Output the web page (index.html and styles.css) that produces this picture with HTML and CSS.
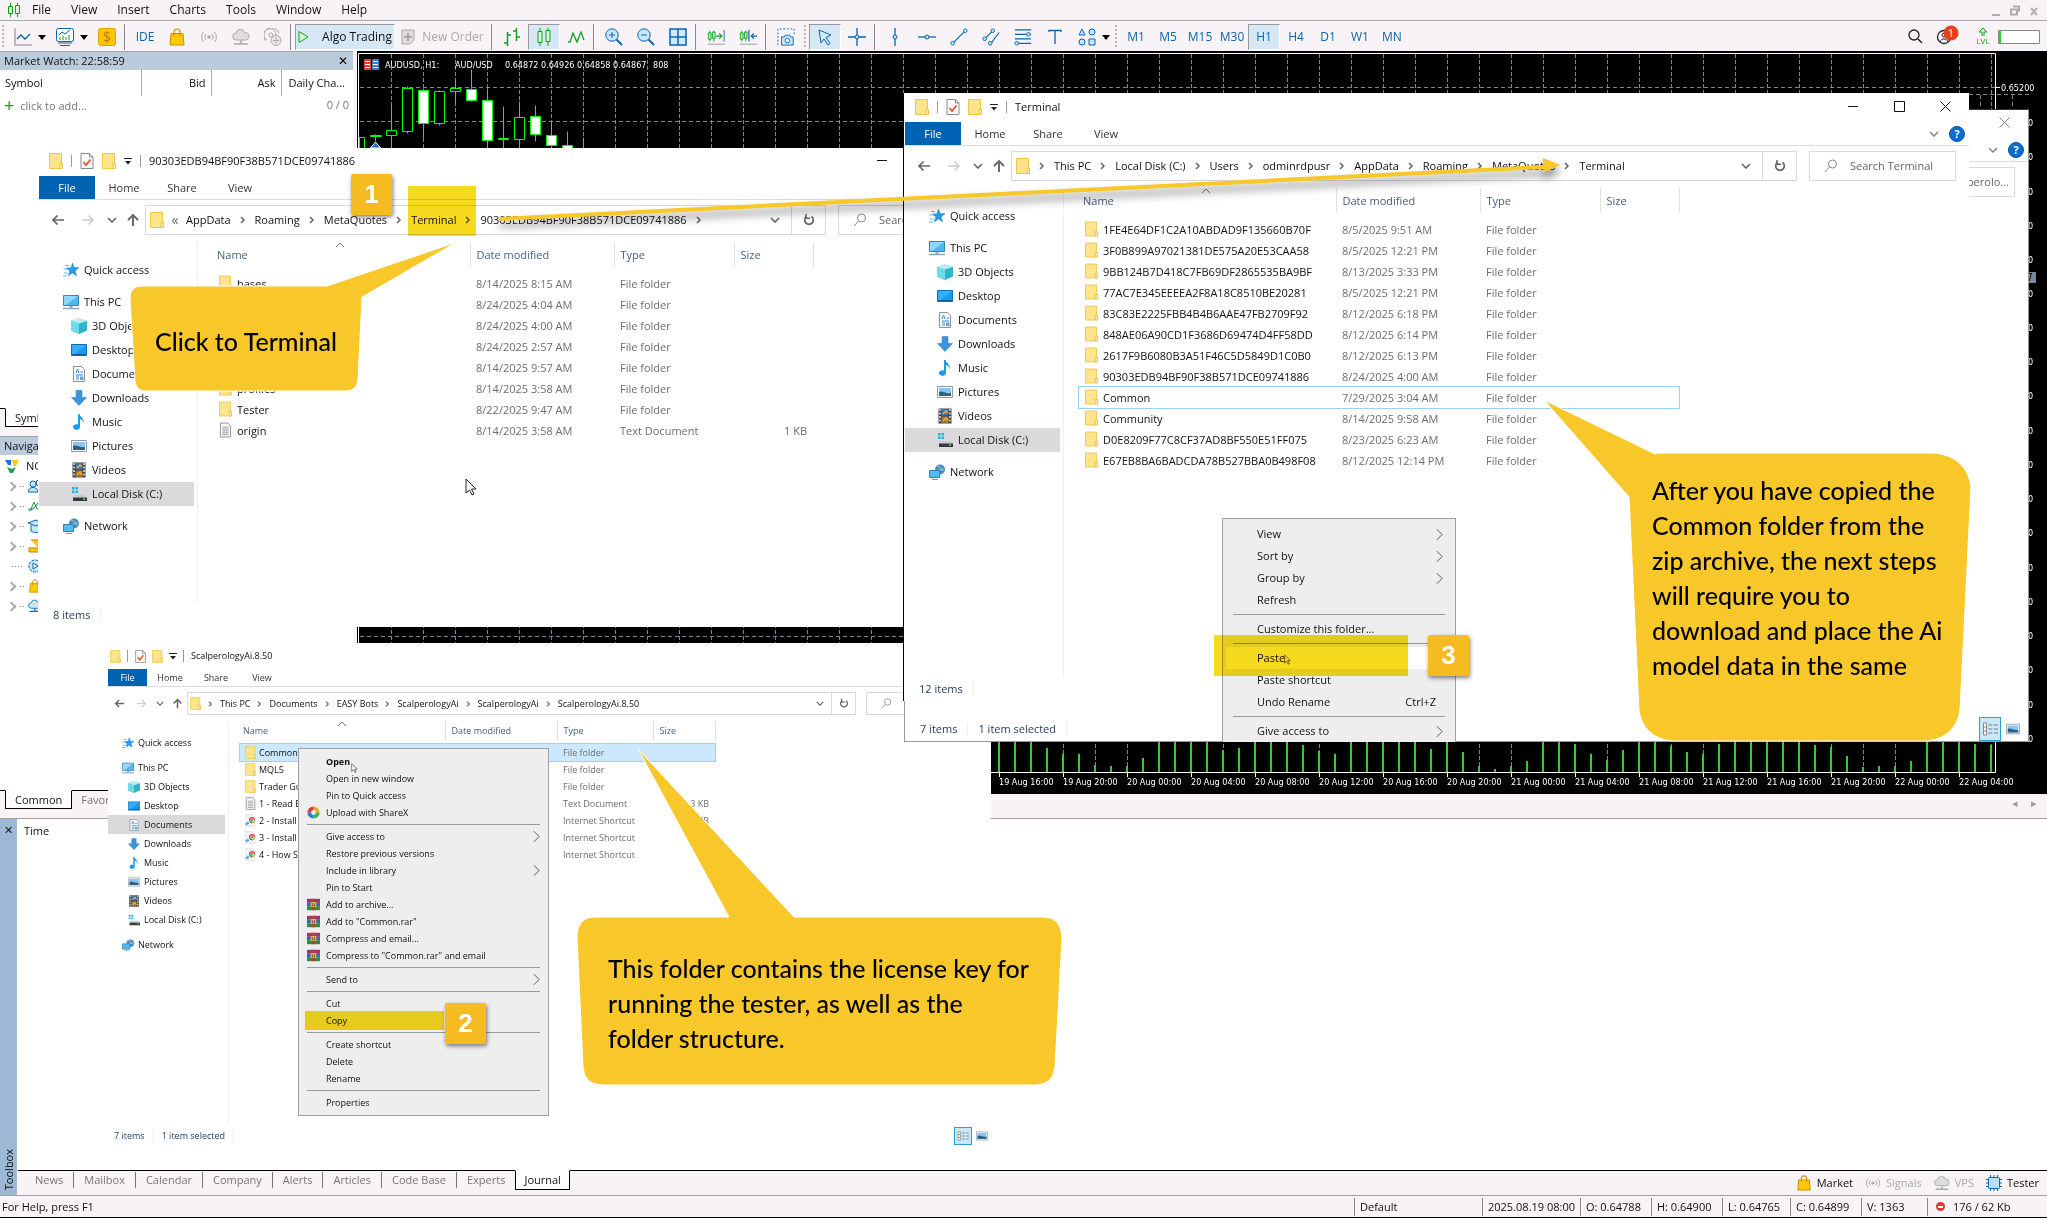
FILE: index.html
```html
<!DOCTYPE html>
<html lang="en">
<head>
<meta charset="utf-8">
<title>Terminal</title>
<link rel="stylesheet" href="styles.css">
</head>
<body>
<svg class="defs" aria-hidden="true">
<symbol id="folder" viewBox="0 0 14 16"><path d="M.5.5h12v15H.5z" fill="#ffe48e" stroke="#f0c648"/><path d="M11 10.500h2.500v5H11z" fill="#ffeeb0" stroke="#ecc04a"/></symbol>
<symbol id="check" viewBox="0 0 13 16"><path d="M.5.5h8.500l3.500 3.500v11.500H.5z" fill="#fafafa" stroke="#8a8a8a"/><path d="M9 .5V4h3.500" fill="none" stroke="#8a8a8a"/><path d="M3 9l2.500 3L10 6.500" fill="none" stroke="#e8552a" stroke-width="1.800"/></symbol>
<symbol id="more" viewBox="0 0 8 8"><path d="M0 1.500h8" stroke="#222"/><path d="M1 4h6L4 7.500z" fill="#222"/></symbol>
<symbol id="star" viewBox="0 0 16 16"><path d="M9.500 1l1.600 4.600 4.900.2-3.900 3 1.500 5-4.300-2.900-4 2.900 1.500-4.800L3.500 6l4.600-.2z" fill="#2a9be6" stroke="#1d7fc8" stroke-width=".5"/><path d="M2 3.500h4M.5 7h4M1 11h3.500M0 14h4" stroke="#5ab4ee" stroke-width="1.200"/></symbol>
<symbol id="pc" viewBox="0 0 16 16"><path d="M.5 1.500h15v10H.5z" fill="#4fb8ee" stroke="#3a86ae"/><path d="M1 2h14L3 11H1z" fill="#8fd6f8"/><path d="M6.500 12h3v2h-3z" fill="#9ab"/><path d="M0 14.500h16" stroke="#8aa4b4" stroke-width="1.400"/></symbol>
<symbol id="cube" viewBox="0 0 16 16"><path d="M0 3l8-2.500L16 3v9.500L8 16l-8-3.500z" fill="#2fb4cc"/><path d="M0 3l8 2.500V16l-8-3.500z" fill="#6fdbe8"/><path d="M0 3l8-2.500L16 3 8 5.500z" fill="#b5f0f4"/></symbol>
<symbol id="desktop" viewBox="0 0 16 16"><path d="M.5 2.500h15v11H.5z" fill="#1a98f2" stroke="#0b6fb8"/><path d="M1 3h14L4 12H1z" fill="#35aefc"/><path d="M1 12.500h14" stroke="#0a5c9c"/></symbol>
<symbol id="docs" viewBox="0 0 16 16"><path d="M2.500.5h8l3 3v12h-11z" fill="#fbfcfd" stroke="#8a9198"/><path d="M5 7l1.500-4L8 7M9.500 6H12M5 9h7M5 11h3M5 13h3" stroke="#2d8fd0" fill="none"/><path d="M9 10.500h3.500V14H9z" fill="#68a8cc"/></symbol>
<symbol id="down" viewBox="0 0 16 16"><path d="M5 .5h6v7h4.500L8 15.500.5 7.500H5z" fill="#3a94e0" stroke="#2878c0" stroke-width=".5"/></symbol>
<symbol id="music" viewBox="0 0 16 16"><path d="M7 0h1.500c.5 3 5 4 4.500 9.500-.500-3-2.500-4-4-4.500v8A3.500 2.800 0 1 1 7 10.500z" fill="#189cf0"/></symbol>
<symbol id="pics" viewBox="0 0 16 16"><path d="M.5 2.500h15v11H.5z" fill="#fff" stroke="#909ba4"/><path d="M2 4h12v8H2z" fill="#8ac5f0"/><path d="M2 8c4-2 6 2 12 1v3H2z" fill="#2c6380"/></symbol>
<symbol id="video" viewBox="0 0 16 16"><path d="M1.500.5h13v15h-13z" fill="#3a3f44"/><path d="M3 1v14M13 1v14" stroke="#dfe4e8" stroke-dasharray="2 1.500" stroke-width="1.500"/><path d="M4.500 1h7v6.500h-7z" fill="#3f73b8"/><path d="M4.500 8.500h7V15h-7z" fill="#9a7438"/><path d="M6 6l3-3 2 2M6 13l3-3 2 3" stroke="#f0b429" stroke-width="1.500" fill="none"/></symbol>
<symbol id="disk" viewBox="0 0 16 16"><path d="M1 1h2.500v2.500H1zM4.500 1H7v2.500H4.500zM1 4.500h2.500V7H1zM4.500 4.500H7V7H4.500z" fill="#1cb0f0"/><path d="M3 9h11l1.500 2.500h-13z" fill="#c8ccd0"/><path d="M2 11.500h14V15H2z" fill="#33383c"/><path d="M12 13h2" stroke="#5fe05f" stroke-width="1.500"/></symbol>
<symbol id="net" viewBox="0 0 16 16"><circle cx="11" cy="5.500" r="5" fill="#4a8cb4"/><path d="M8 2c3 0 3 3 6 3M9 6h6" stroke="#9fd0e8" fill="none"/><path d="M.5 6.500h10v7H.5z" fill="#52bcf2" stroke="#3482b0"/><path d="M3 15.500h6" stroke="#7c98a8"/></symbol>
<symbol id="txt" viewBox="0 0 14 16"><path d="M1.500.5h8l3 3v12h-11z" fill="#fafafa" stroke="#8c8c8c"/><path d="M3.500 5h7M3.500 7h7M3.500 9h7M3.500 11h7M3.500 13h7" stroke="#9a9a9a"/></symbol>
<symbol id="url" viewBox="0 0 14 16"><path d="M1 .5h8.500l3 3v12H1z" fill="#f2f4f6" stroke="#dde1e4"/><circle cx="9" cy="7.500" r="4" fill="#e6483b"/><path d="M9 7.500h4a4 4 0 0 1-4 4z" fill="#f4c22e"/><path d="M5 7.500a4 4 0 0 0 4 4V7.500z" fill="#2fa24f"/><circle cx="9" cy="7.500" r="1.800" fill="#3f83e8" stroke="#fff" stroke-width=".6"/><path d="M0 9h6v6H0z" fill="#dfeefd"/><path d="M1.500 14V11.500h3M3 10l1.700 1.500L3 13" stroke="#1867c4" fill="none"/></symbol>
<symbol id="rar" viewBox="0 0 16 14"><path d="M0 0h16v5H0z" fill="#a03478"/><path d="M0 5h16v4H0z" fill="#3568b8"/><path d="M0 9h16v5H0z" fill="#2e8f48"/><path d="M5.500 0h5v14h-5z" fill="#a8482c"/><path d="M4.500 4h7v6h-7z" fill="#e9c25a"/><path d="M6.500 5v3.500h3V5" stroke="#6a3a20" fill="none"/></symbol>
<symbol id="sharex" viewBox="0 0 16 16"><path d="M8 .5A7.500 7.500 0 0 1 15.500 8H11A3 3 0 0 0 8 5z" fill="#f2a71b"/><path d="M15.500 8A7.500 7.500 0 0 1 8 15.500V11a3 3 0 0 0 3-3z" fill="#39b54a"/><path d="M8 15.500A7.500 7.500 0 0 1 .5 8H5a3 3 0 0 0 3 3z" fill="#1d83e2"/><path d="M.5 8A7.500 7.500 0 0 1 8 .5V5a3 3 0 0 0-3 3z" fill="#e8332a"/></symbol>
<symbol id="back" viewBox="0 0 14 12"><path d="M13 6H2M6.500 1.500L2 6l4.500 4.500" fill="none" stroke="currentColor" stroke-width="1.700"/></symbol>
<symbol id="fwd" viewBox="0 0 14 12"><path d="M1 6h11M7.500 1.500L12 6l-4.500 4.500" fill="none" stroke="currentColor" stroke-width="1.500"/></symbol>
<symbol id="up" viewBox="0 0 12 14"><path d="M6 13V2M1 7l5-5 5 5" fill="none" stroke="currentColor" stroke-width="1.900"/></symbol>
<symbol id="chev" viewBox="0 0 10 6"><path d="M1 1l4 4 4-4" fill="none" stroke="currentColor" stroke-width="1.600"/></symbol>
<symbol id="caret" viewBox="0 0 10 6"><path d="M1 5l4-4 4 4" fill="none" stroke="#777"/></symbol>
<symbol id="rchev" viewBox="0 0 6 10"><path d="M1 2l3 3-3 3" fill="none" stroke="currentColor" stroke-width="1.500"/></symbol>
<symbol id="sub" viewBox="0 0 8 14"><path d="M1 1l6 6-6 6" fill="none" stroke="#444"/></symbol>
<symbol id="refresh" viewBox="0 0 12 14"><path d="M8.500 3.500a4.300 4.300 0 1 1-5 0" fill="none" stroke="#666" stroke-width="1.700"/><path d="M3 1v4.200h4" fill="none" stroke="#666" stroke-width="1.500"/></symbol>
<symbol id="glass" viewBox="0 0 14 14"><circle cx="8.500" cy="5" r="4" fill="none" stroke="#888"/><path d="M5.500 8L1 13" stroke="#888"/></symbol>
<symbol id="bag" viewBox="0 0 16 18"><path d="M2 5.500h12l1 11.500H1z" fill="#ffc800" stroke="#c88f00"/><path d="M5 8V4a3 3 0 0 1 6 0v4" fill="none" stroke="#c88f00" stroke-width="1.200"/></symbol>
<symbol id="signal" viewBox="0 0 18 16"><circle cx="9" cy="8" r="1.800" fill="currentColor"/><path d="M6 5a4.500 4.500 0 0 0 0 6M12 5a4.500 4.500 0 0 1 0 6M3.500 3a7.500 7.500 0 0 0 0 10M14.500 3a7.500 7.500 0 0 1 0 10" fill="none" stroke="currentColor"/></symbol>
<symbol id="cloud" viewBox="0 0 18 18"><path d="M4.500 12a3.500 3.500 0 0 1-.5-7A4.500 4.500 0 0 1 12.700 4.500 3.700 3.700 0 0 1 13.500 12z" fill="var(--cf,#dcdcdc)" stroke="currentColor"/><path d="M9 12v4M2 16h14M7.500 16h3" stroke="currentColor" stroke-width="1.500"/></symbol>
<symbol id="details" viewBox="0 0 16 14"><path d="M1.500 1h3v12h-3zM1.500 5h3M1.500 9h3" fill="#fff" stroke="#888"/><path d="M6.500 3h4M12 3h4M6.500 7h4M12 7h4M6.500 11h4M12 11h4" stroke="#6c7c88"/></symbol>
<symbol id="cursor" viewBox="0 0 12 18"><path d="M1 1v14l3.500-3 2.500 5 2-1-2.500-5H11z" fill="#fff" stroke="#222"/></symbol>
</svg>

<header class="menubar">
<svg class="logo" viewBox="0 0 12 14"><path d="M2.500 0v14M9.500 0v14" stroke="#12a020"/><path d="M.5 3.500h4v7h-4zM7.500 2.500h4v8h-4z" fill="#d8f5d8" stroke="#12a020"/></svg>
<button>File</button><button>View</button><button>Insert</button><button>Charts</button><button>Tools</button><button>Window</button><button>Help</button>
<svg class="mdi" viewBox="0 0 50 14"><path d="M1 12h8" stroke="#b0abb0" stroke-width="2"/><path d="M20 6.500h6v5h-6zM22 3.500h6v5" fill="none" stroke="#b0abb0" stroke-width="2"/><path d="M40 5l6 7M46 5l-6 7" stroke="#b0abb0" stroke-width="2"/></svg>
</header>

<nav class="toolbar">
<i class="grip"></i>
<button class="tool dd" aria-label="Line"><svg viewBox="0 0 18 18"><path d="M1 0v17h17" fill="none" stroke="#aaa" stroke-width="1.500"/><path d="M3 11l4-4 4 4 5-5" fill="none" stroke="#0a64ad" stroke-width="1.300"/></svg></button>
<button class="tool dd" aria-label="Chart"><svg viewBox="0 0 18 18"><rect x=".5" y=".5" width="17" height="13" rx="2" fill="#fff" stroke="#0a64ad"/><path d="M3 7l3-3 3 2 5-4" fill="none" stroke="#0a64ad"/><path d="M4 12V9M7 12V8M10 12V9M13 12V7" stroke="#12a020"/><path d="M2 15h14M4 17.500h10" stroke="#0a64ad"/></svg></button>
<button class="tool" aria-label="Quotes"><svg viewBox="0 0 18 18"><rect x=".5" y=".5" width="17" height="17" rx="2" fill="#fdc400" stroke="#e0a400"/><text x="9" y="14" text-anchor="middle" font-size="14" fill="#c07800">$</text></svg></button>
<i class="sep"></i>
<button class="tool">IDE</button>
<button class="tool" aria-label="Market"><svg><use href="#bag"/></svg></button>
<button class="tool off" aria-label="Signals"><svg><use href="#signal"/></svg></button>
<button class="tool off" aria-label="VPS"><svg><use href="#cloud"/></svg></button>
<button class="tool off" aria-label="Copy"><svg viewBox="0 0 18 18"><circle cx="7" cy="7" r="2" fill="none" stroke="currentColor"/><path d="M3 12a6 6 0 1 1 9-5M1.500 13A8 8 0 1 1 15 5" fill="none" stroke="currentColor"/><circle cx="12" cy="12.500" r="5" fill="#e8e6e8" stroke="currentColor"/><path d="M12 9.500v6M9 12.500h6" stroke="currentColor"/></svg></button>
<i class="sep"></i>
<button class="tool algo on"><svg viewBox="0 0 12 14"><path d="M1 1.500L10 7l-9 5.500z" fill="#d8f5d8" stroke="#12a020"/></svg>Algo Trading</button>
<button class="tool order off"><svg viewBox="0 0 14 16"><path d="M1 1h12v10l-4 4H1z" fill="#dedcde" stroke="#aaa"/><path d="M7 4v8M3 8h8" stroke="#999" stroke-width="1.500"/></svg>New Order</button>
<i class="sep"></i>
<button class="tool" aria-label="Bars"><svg viewBox="0 0 18 18"><path d="M4.500 4v14M4.500 7H8M1 15h3.500M13.500 0v13M13.500 9H17M10 3h3.500" stroke="#12a020" stroke-width="1.500"/></svg></button>
<button class="tool on" aria-label="Candles"><svg viewBox="0 0 18 18"><path d="M5 0v18M13 0v18" stroke="#12a020"/><path d="M3 3.500h4v11H3zM11 2.500h4v11h-4z" fill="#d8f5d8" stroke="#12a020"/></svg></button>
<button class="tool" aria-label="Line chart"><svg viewBox="0 0 18 18"><path d="M1 14h2l3-9 4 9 4-10 3 8" fill="none" stroke="#12a020" stroke-width="1.300"/></svg></button>
<i class="sep"></i>
<button class="tool" aria-label="Zoom in"><svg viewBox="0 0 18 18"><circle cx="7" cy="7" r="6.200" fill="#c8e6fa" stroke="#0a64ad"/><path d="M4 7h6M7 4v6" stroke="#0a64ad"/><path d="M11.500 11.500L17 17" stroke="#0a64ad" stroke-width="2"/></svg></button>
<button class="tool" aria-label="Zoom out"><svg viewBox="0 0 18 18"><circle cx="7" cy="7" r="6.200" fill="#c8e6fa" stroke="#0a64ad"/><path d="M4 7h6" stroke="#0a64ad"/><path d="M11.500 11.500L17 17" stroke="#0a64ad" stroke-width="2"/></svg></button>
<button class="tool" aria-label="Tile"><svg viewBox="0 0 18 18"><path d="M1 1h16v16H1zM9 1v16M1 9h16" fill="#d0eafa" stroke="#0a64ad" stroke-width="1.500"/></svg></button>
<i class="sep"></i>
<button class="tool" aria-label="Autoscroll"><svg viewBox="0 0 20 18"><path d="M3 2v12M7.500 2v12" stroke="#12a020"/><path d="M1.500 4.500h3v7h-3zM6 3.500h3v7H6z" fill="#bdf0bd" stroke="#12a020"/><path d="M10 8h6M13.500 5l3 3-3 3" fill="none" stroke="#12a020" stroke-width="1.300"/><path d="M19 1v13" stroke="#0a64ad"/><path d="M1 17h19" stroke="#999"/></svg></button>
<button class="tool" aria-label="Shift"><svg viewBox="0 0 20 18"><path d="M3 2v12M7.500 2v12" stroke="#12a020"/><path d="M1.500 4.500h3v7h-3zM6 3.500h3v7H6z" fill="#bdf0bd" stroke="#12a020"/><path d="M11 1v13M20 8h-6M16.500 5l-3 3 3 3" fill="none" stroke="#0a64ad" stroke-width="1.300"/><path d="M1 17h19" stroke="#999"/></svg></button>
<i class="sep"></i>
<button class="tool" aria-label="Screenshot"><svg viewBox="0 0 20 20"><path d="M1 19V1h18v8" fill="none" stroke="#0a64ad" stroke-dasharray="2 2"/><path d="M5 19v-9h3l1-2h5l1 2h3v9z" fill="#c8e6fa" stroke="#0a64ad"/><circle cx="11.500" cy="14" r="2.500" fill="#fff" stroke="#0a64ad"/></svg></button>
<i class="grip"></i>
<button class="tool on" aria-label="Pointer"><svg viewBox="0 0 18 18"><path d="M3 2l12 5-5 2.500 4 6-2 1.500-4-6-3 4z" fill="#d0eafa" stroke="#0a64ad"/></svg></button>
<button class="tool" aria-label="Crosshair"><svg viewBox="0 0 18 18"><path d="M9 0v18M0 9h18" stroke="#0a64ad" stroke-width="1.300"/><circle cx="9" cy="9" r="2" fill="#c8e6fa" stroke="#0a64ad"/></svg></button>
<i class="sep"></i>
<button class="tool" aria-label="Vertical line"><svg viewBox="0 0 18 18"><path d="M9 0v18" stroke="#0a64ad" stroke-width="1.300"/><circle cx="9" cy="9" r="2" fill="#c8e6fa" stroke="#0a64ad"/></svg></button>
<button class="tool" aria-label="Horizontal line"><svg viewBox="0 0 18 18"><path d="M0 9h18" stroke="#0a64ad" stroke-width="1.300"/><circle cx="9" cy="9" r="2" fill="#c8e6fa" stroke="#0a64ad"/></svg></button>
<button class="tool" aria-label="Trend line"><svg viewBox="0 0 20 20"><path d="M3 17L17 3" stroke="#0a64ad" stroke-width="1.300"/><circle cx="3" cy="17" r="2" fill="#c8e6fa" stroke="#0a64ad"/><circle cx="17" cy="3" r="2" fill="#c8e6fa" stroke="#0a64ad"/></svg></button>
<button class="tool" aria-label="Channel"><svg viewBox="0 0 20 20"><path d="M3 12L12 3M10 17l9-12" stroke="#0a64ad" stroke-width="1.300"/><circle cx="3" cy="12" r="2" fill="#c8e6fa" stroke="#0a64ad"/><circle cx="12" cy="3" r="2" fill="#c8e6fa" stroke="#0a64ad"/><circle cx="9" cy="17" r="2" fill="#c8e6fa" stroke="#0a64ad"/></svg></button>
<button class="tool" aria-label="Fibonacci"><svg viewBox="0 0 20 20"><path d="M1 2h18M1 7h18M1 12h18M3 17h16" stroke="#0a64ad" stroke-width="1.300"/><circle cx="16" cy="7" r="2" fill="#c8e6fa" stroke="#0a64ad"/><circle cx="3" cy="17" r="2" fill="#c8e6fa" stroke="#0a64ad"/></svg></button>
<button class="tool" aria-label="Text"><svg viewBox="0 0 18 18"><path d="M3 4V2.500h12V4M9 2.500V16" fill="none" stroke="#0a64ad" stroke-width="1.300"/></svg></button>
<button class="tool dd" aria-label="Shapes"><svg viewBox="0 0 18 18"><path d="M4 1L1 7h6zM11 11h6v6h-6z" fill="#c8e6fa" stroke="#0a64ad"/><circle cx="14" cy="4" r="3" fill="#c8e6fa" stroke="#0a64ad"/><circle cx="4" cy="14" r="3" fill="#c8e6fa" stroke="#0a64ad"/></svg></button>
<i class="grip"></i>
<button class="tool">M1</button><button class="tool">M5</button><button class="tool">M15</button><button class="tool">M30</button><button class="tool on">H1</button><button class="tool">H4</button><button class="tool">D1</button><button class="tool">W1</button><button class="tool">MN</button>
<svg class="account" viewBox="0 0 136 26"><circle cx="8" cy="11" r="5" fill="none" stroke="#222" stroke-width="1.300"/><path d="M12 15l4 4" stroke="#222" stroke-width="1.500"/><circle cx="38" cy="13" r="6.500" fill="none" stroke="#222" stroke-width="1.300"/><circle cx="38" cy="11" r="2" fill="none" stroke="#222"/><path d="M34 18c1-4 7-4 8 0" fill="none" stroke="#222"/><circle cx="45" cy="9" r="7.500" fill="#e8401c"/><text x="45" y="13" text-anchor="middle" fill="#fff" font-size="11">1</text><path d="M76 12V8h-3l4-4 4 4h-3v4" fill="none" stroke="#12a020"/><text x="77" y="20" text-anchor="middle" font-size="8" fill="#12a020">LVL</text><path d="M92.500 6.500h41v13h-41z" fill="#fff" stroke="#888"/><path d="M94 7v12" stroke="#32d032" stroke-width="2"/></svg>
</nav>

<main class="workspace">
<aside class="panels">
<section class="watch">
<h2>Market Watch: 22:58:59 <span class="x">✕</span></h2>
<table><thead><tr><th>Symbol</th><th>Bid</th><th>Ask</th><th>Daily Cha...</th></tr></thead>
<tbody><tr><td colspan="3"><b>+</b>click to add...</td><td>0 / 0</td></tr></tbody></table>
</section>
<div class="tabs"><button class="cur">Symbols</button></div>
<section class="navigator">
<h2>Navigator</h2>
<ul>
<li class="root"><svg viewBox="0 0 14 14"><path d="M0 1l6 0 0 5-3 0z" fill="#1c6fd8"/><path d="M6 1h8l-3 6H8V4z" fill="#ffc81e"/><path d="M2 8l5 2 4-2-3 6H5z" fill="#20a048"/></svg>NCSE</li>
<li><svg viewBox="0 0 14 14"><circle cx="5" cy="5" r="3" fill="#c8e6fa" stroke="#0a64ad"/><circle cx="11" cy="4" r="3" fill="#c8e6fa" stroke="#0a64ad"/><path d="M0 13c0-6 10-6 10 0zM10 13h4V9" fill="#c8e6fa" stroke="#0a64ad"/></svg></li>
<li><svg viewBox="0 0 14 14"><path d="M0 10h3l3-7 3 7h3" fill="none" stroke="#12a020"/><path d="M1 12l5-3 4-5 4 3" fill="none" stroke="#0a64ad"/></svg></li>
<li><svg viewBox="0 0 14 14"><path d="M0 4l8-3 6 3-6 3zM3 6v6c3 2 7 2 9 0V6" fill="#c8e6fa" stroke="#0a64ad"/></svg></li>
<li><svg viewBox="0 0 14 14"><path d="M3 1h11v12H1V9h9" fill="#ffc800" stroke="#b98200"/></svg></li>
<li class="leaf"><svg viewBox="0 0 14 14"><circle cx="7" cy="7" r="6" fill="#c8e6fa" stroke="#0a64ad" stroke-dasharray="3 1"/><path d="M5 4l5 3-5 3z" fill="#fff" stroke="#0a64ad"/></svg></li>
<li><svg><use href="#bag"/></svg></li>
<li class="cl"><svg><use href="#cloud"/></svg></li>
</ul>
</section>
<div class="tabs"><button class="cur">Common</button><button>Favorites</button></div>
</aside>
<section class="chart">
<svg viewBox="357 51 1690 743" preserveAspectRatio="xMinYMin slice">
<defs><pattern id="v" x="391" y="54" width="32" height="6" patternUnits="userSpaceOnUse"><path d="M.5 0v4" stroke="#778899"/></pattern></defs>
<rect x="357" y="51" width="1690" height="743" fill="#000"/>
<rect x="360" y="54" width="1635" height="718" fill="url(#v)"/>
<path d="M360 87.500h1635M360 121.500h1635M360 636.500h1635M1969 94.500h60" stroke="#778899" stroke-dasharray="4 3"/>
<path d="M1980.500 95v14M2012.500 95v14" stroke="#778899" stroke-dasharray="4 3"/>
<path d="M358.500 772V53.500h1637V772.500H358" fill="none" stroke="#fff"/>
<g stroke="#0f0" fill="#000" transform="translate(.5 .5)">
<path d="M375 134v7M391 105v44M407 86v47M423 88v50M439 90v35M455 80v23M471 69v32M487 88v60M503 106v42M519 101v47M535 105v36M551 122v26M567 131v17M583 137v11"/>
<path d="M370 135h11v1h-11zM498 138h10v1h-10z"/>
<path d="M359 137h5v20h-5zM386 130h10v5h-10zM402 88h10v43h-10zM434 91h10v32h-10zM450 88h10v3h-10zM514 117h10v22h-10z"/>
<path d="M418 90h10v33h-10zM466 89h10v11h-10zM482 100h10v40h-10zM530 116h10v18h-10zM546 135h10v10h-10zM562 145h10v5h-10z" fill="#fff"/>
</g>
<path d="M375.500 142l5 6h-10z" fill="#1c6fd8" stroke="#fff"/>
<path d="M364 59h7v11h-7z" fill="#e04030"/><path d="M372 59h7v11h-7z" fill="#3c78c8"/><path d="M365 61.500h5M365 64.500h5M365 67.500h5M373 61.500h5M373 64.500h5M373 67.500h5" stroke="#fff"/>
<g class="axis"><text x="385" y="68">AUDUSD, H1:</text><text x="455" y="68">AUD/USD</text><text x="505" y="68">0.64872</text><text x="541" y="68">0.64926</text><text x="577" y="68">0.64858</text><text x="613" y="68">0.64867</text><text x="653" y="68">808</text>
<text x="2001" y="91">0.65200</text><path d="M1995 87.500h5" stroke="#fff"/></g>
<g class="axis"><text x="2028" y="126">0</text><text x="2028" y="160">0</text><text x="2028" y="195">0</text><text x="2028" y="229">0</text><text x="2028" y="263">0</text><text x="2028" y="297">0</text><text x="2028" y="331">0</text><text x="2028" y="365">0</text><text x="2028" y="399">0</text><text x="2028" y="434">0</text><text x="2028" y="468">0</text><text x="2028" y="502">0</text><text x="2028" y="536">0</text><text x="2028" y="571">0</text><text x="2028" y="605">0</text><text x="2028" y="639">0</text><text x="2028" y="673">0</text><text x="2028" y="708">0</text><text x="2028" y="742">0</text></g>
<rect x="2028" y="272" width="8" height="11" fill="#778899"/><text x="2027" y="281" font-size="10">7</text>
<path d="M2028.500 513v20M2028.500 540v8M2028.500 656v20" stroke="#12a020"/>
<path stroke="#32cd32" stroke-width="2" d="M999 742v30M1015 742v30M1031 742v30M1047 748v24M1063 754v18M1079 754v18M1095 765v7M1111 766v6M1127 766v6M1143 758v14M1159 742v30M1175 742v30M1191 742v30M1207 742v30M1223 750v22M1239 748v24M1255 742v30M1271 742v30M1287 742v30M1303 745v27M1319 751v21M1335 754v18M1351 742v30M1367 742v30M1383 742v30M1399 742v30M1415 742v30M1431 749v23M1447 742v30M1463 752v20M1479 766v6M1495 769v3M1511 766v6M1527 761v11M1543 742v30M1559 742v30M1575 744v28M1591 754v18M1607 760v12M1623 750v22M1639 742v30M1655 742v30M1671 746v26M1687 752v20M1703 754v18M1719 744v28M1735 742v30M1751 742v30M1767 742v30M1783 742v30M1799 742v30M1815 745v27M1831 747v25M1847 756v16M1863 767v5M1879 766v6M1895 766v6M1911 761v11M1927 742v30M1943 742v30M1959 742v30M1975 744v28M1991 745v27"/>
<path d="M999.500 772v5M1063.500 772v5M1127.500 772v5M1191.500 772v5M1255.500 772v5M1319.500 772v5M1383.500 772v5M1447.500 772v5M1511.500 772v5M1575.500 772v5M1639.500 772v5M1703.500 772v5M1767.500 772v5M1831.500 772v5M1895.500 772v5M1959.500 772v5" stroke="#fff"/>
<g class="axis"><text x="999" y="785">19 Aug 16:00</text><text x="1063" y="785">19 Aug 20:00</text><text x="1127" y="785">20 Aug 00:00</text><text x="1191" y="785">20 Aug 04:00</text><text x="1255" y="785">20 Aug 08:00</text><text x="1319" y="785">20 Aug 12:00</text><text x="1383" y="785">20 Aug 16:00</text><text x="1447" y="785">20 Aug 20:00</text><text x="1511" y="785">21 Aug 00:00</text><text x="1575" y="785">21 Aug 04:00</text><text x="1639" y="785">21 Aug 08:00</text><text x="1703" y="785">21 Aug 12:00</text><text x="1767" y="785">21 Aug 16:00</text><text x="1831" y="785">21 Aug 20:00</text><text x="1895" y="785">22 Aug 00:00</text><text x="1959" y="785">22 Aug 04:00</text></g>
</svg>
<div class="scroll"><span>◂</span><span>▸</span></div>
</section>
</main>

<section class="toolbox">
<div class="strip"><span>✕</span><span class="vert">Toolbox</span></div>
<div class="journal"><div class="time">Time</div>
<div class="btabs"><button>News</button><button>Mailbox</button><button>Calendar</button><button>Company</button><button>Alerts</button><button>Articles</button><button>Code Base</button><button>Experts</button><button class="cur">Journal</button>
<div class="services"><a href="#"><svg><use href="#bag"/></svg>Market</a><a href="#" class="off"><svg><use href="#signal"/></svg>Signals</a><a href="#" class="off"><svg><use href="#cloud"/></svg>VPS</a><a href="#"><svg viewBox="0 0 16 16"><path d="M4.500 0v16M8 0v16M11.500 0v16M0 4.500h16M0 8h16M0 11.500h16" stroke="#0a64ad"/><rect x="2.500" y="2.500" width="11" height="11" rx="1" fill="#b8dffa" stroke="#0a64ad"/></svg>Tester</a></div></div>
</div>
</section>

<footer class="status"><span class="hint">For Help, press F1</span><span class="profile">Default</span><span class="when">2025.08.19 08:00</span><span>O: 0.64788</span><span>H: 0.64900</span><span class="low">L: 0.64765</span><span>C: 0.64899</span><span class="vol">V: 1363</span><span class="net"><i></i>176 / 62 Kb</span></footer>

<article class="explorer small w3">
<div class="title"><svg class="fold"><use href="#folder"/></svg><i></i><svg class="fold"><use href="#check"/></svg><svg class="fold"><use href="#folder"/></svg><svg class="dd"><use href="#more"/></svg><i></i><span>ScalperologyAi.8.50</span><div class="wb"><button aria-label="Minimize"><svg viewBox="0 0 11 11"><path d="M0 5.500h10" stroke="#888"/></svg></button><button aria-label="Maximize"></button><button aria-label="Close"></button></div></div>
<div class="ribbon"><button class="file">File</button><button>Home</button><button>Share</button><button>View</button></div>
<div class="nav"><button aria-label="Back"><svg class="ar"><use href="#back"/></svg></button><button aria-label="Forward" class="dim"><svg class="ar"><use href="#fwd"/></svg></button><button aria-label="Recent"><svg class="cv"><use href="#chev"/></svg></button><button aria-label="Up"><svg class="ar"><use href="#up"/></svg></button>
<div class="address"><svg class="fold"><use href="#folder"/></svg><svg class="rc"><use href="#rchev"/></svg><a href="#">This PC</a><svg class="rc"><use href="#rchev"/></svg><a href="#">Documents</a><svg class="rc"><use href="#rchev"/></svg><a href="#">EASY Bots</a><svg class="rc"><use href="#rchev"/></svg><a href="#">ScalperologyAi</a><svg class="rc"><use href="#rchev"/></svg><a href="#">ScalperologyAi</a><svg class="rc"><use href="#rchev"/></svg><a href="#">ScalperologyAi.8.50</a><svg class="cv end"><use href="#chev"/></svg><button class="rf" aria-label="Refresh"><svg><use href="#refresh"/></svg></button></div>
<label class="search"><svg><use href="#glass"/></svg><input placeholder="Search" aria-label="Search"></label></div>
<div class="body">
<ul class="tree"><li><a href="#"><svg><use href="#star"/></svg>Quick access</a></li><li class="gap"><a href="#"><svg><use href="#pc"/></svg>This PC</a></li><li class="in"><a href="#"><svg><use href="#cube"/></svg>3D Objects</a></li><li class="in"><a href="#"><svg><use href="#desktop"/></svg>Desktop</a></li><li class="in sel"><a href="#"><svg><use href="#docs"/></svg>Documents</a></li><li class="in"><a href="#"><svg><use href="#down"/></svg>Downloads</a></li><li class="in"><a href="#"><svg><use href="#music"/></svg>Music</a></li><li class="in"><a href="#"><svg><use href="#pics"/></svg>Pictures</a></li><li class="in"><a href="#"><svg><use href="#video"/></svg>Videos</a></li><li class="in"><a href="#"><svg><use href="#disk"/></svg>Local Disk (C:)</a></li><li class="gap"><a href="#"><svg><use href="#net"/></svg>Network</a></li></ul>
<table class="files"><colgroup><col class="c1"><col class="c2"><col class="c3"><col class="c4"></colgroup><thead><tr><th>Name<svg class="sort"><use href="#caret"/></svg></th><th>Date modified</th><th>Type</th><th>Size</th></tr></thead><tbody>
<tr class="picked"><td><svg><use href="#folder"/></svg>Common</td><td></td><td>File folder</td><td></td></tr>
<tr><td><svg><use href="#folder"/></svg>MQL5</td><td></td><td>File folder</td><td></td></tr>
<tr><td><svg><use href="#folder"/></svg>Trader Guide</td><td></td><td>File folder</td><td></td></tr>
<tr><td><svg><use href="#txt"/></svg>1 - Read Before</td><td></td><td>Text Document</td><td>3 KB</td></tr>
<tr><td><svg><use href="#url"/></svg>2 - Install</td><td></td><td>Internet Shortcut</td><td>1 KB</td></tr>
<tr><td><svg><use href="#url"/></svg>3 - Install</td><td></td><td>Internet Shortcut</td><td></td></tr>
<tr><td><svg><use href="#url"/></svg>4 - How Set</td><td></td><td>Internet Shortcut</td><td></td></tr>
</tbody></table></div>
<div class="foot"><span>7 items</span><span>1 item selected</span><div class="views"><button class="on" aria-label="Details"><svg><use href="#details"/></svg></button><button aria-label="Thumbnails"><svg><use href="#pics"/></svg></button></div></div>
</article>

<article class="explorer w1">
<div class="title"><svg class="fold"><use href="#folder"/></svg><i></i><svg class="fold"><use href="#check"/></svg><svg class="fold"><use href="#folder"/></svg><svg class="dd"><use href="#more"/></svg><i></i><span>90303EDB94BF90F38B571DCE09741886</span><div class="wb"><button aria-label="Minimize"><svg viewBox="0 0 11 11"><path d="M0 5.500h10" stroke="#111"/></svg></button><button aria-label="Maximize"></button><button aria-label="Close"></button></div></div>
<div class="ribbon"><button class="file">File</button><button>Home</button><button>Share</button><button>View</button></div>
<div class="nav"><button aria-label="Back"><svg class="ar"><use href="#back"/></svg></button><button aria-label="Forward" class="dim"><svg class="ar"><use href="#fwd"/></svg></button><button aria-label="Recent"><svg class="cv"><use href="#chev"/></svg></button><button aria-label="Up"><svg class="ar"><use href="#up"/></svg></button>
<div class="address"><svg class="fold"><use href="#folder"/></svg><span class="lead">«</span><a href="#">AppData</a><svg class="rc"><use href="#rchev"/></svg><a href="#">Roaming</a><svg class="rc"><use href="#rchev"/></svg><a href="#">MetaQuotes</a><svg class="rc"><use href="#rchev"/></svg><a href="#">Terminal</a><svg class="rc"><use href="#rchev"/></svg><a href="#">90303EDB94BF90F38B571DCE09741886</a><svg class="rc"><use href="#rchev"/></svg><svg class="cv end"><use href="#chev"/></svg><button class="rf" aria-label="Refresh"><svg><use href="#refresh"/></svg></button></div>
<label class="search"><svg><use href="#glass"/></svg><input placeholder="Search" aria-label="Search"></label></div>
<div class="body">
<ul class="tree"><li><a href="#"><svg><use href="#star"/></svg>Quick access</a></li><li class="gap"><a href="#"><svg><use href="#pc"/></svg>This PC</a></li><li class="in"><a href="#"><svg><use href="#cube"/></svg>3D Objects</a></li><li class="in"><a href="#"><svg><use href="#desktop"/></svg>Desktop</a></li><li class="in"><a href="#"><svg><use href="#docs"/></svg>Documents</a></li><li class="in"><a href="#"><svg><use href="#down"/></svg>Downloads</a></li><li class="in"><a href="#"><svg><use href="#music"/></svg>Music</a></li><li class="in"><a href="#"><svg><use href="#pics"/></svg>Pictures</a></li><li class="in"><a href="#"><svg><use href="#video"/></svg>Videos</a></li><li class="in sel"><a href="#"><svg><use href="#disk"/></svg>Local Disk (C:)</a></li><li class="gap"><a href="#"><svg><use href="#net"/></svg>Network</a></li></ul>
<table class="files"><colgroup><col class="c1"><col class="c2"><col class="c3"><col class="c4"></colgroup><thead><tr><th>Name<svg class="sort"><use href="#caret"/></svg></th><th>Date modified</th><th>Type</th><th>Size</th></tr></thead><tbody>
<tr><td><svg><use href="#folder"/></svg>bases</td><td>8/14/2025 8:15 AM</td><td>File folder</td><td></td></tr>
<tr><td></td><td>8/24/2025 4:04 AM</td><td>File folder</td><td></td></tr>
<tr><td></td><td>8/24/2025 4:00 AM</td><td>File folder</td><td></td></tr>
<tr><td></td><td>8/24/2025 2:57 AM</td><td>File folder</td><td></td></tr>
<tr><td></td><td>8/14/2025 9:57 AM</td><td>File folder</td><td></td></tr>
<tr><td><svg><use href="#folder"/></svg>profiles</td><td>8/14/2025 3:58 AM</td><td>File folder</td><td></td></tr>
<tr><td><svg><use href="#folder"/></svg>Tester</td><td>8/22/2025 9:47 AM</td><td>File folder</td><td></td></tr>
<tr><td><svg><use href="#txt"/></svg>origin</td><td>8/14/2025 3:58 AM</td><td>Text Document</td><td>1 KB</td></tr>
</tbody></table></div>
<div class="foot"><span>8 items</span></div>
</article>

<article class="explorer behind">
<div class="title"><div class="wb"><button aria-label="Close"><svg viewBox="0 0 11 11"><path d="M.5.5l10 10M10.500.5l-10 10" stroke="#888"/></svg></button></div></div>
<div class="ribbon"><div class="tools"><svg class="cv"><use href="#chev"/></svg><span class="hp">?</span></div></div>
<div class="nav"><label class="search"><svg><use href="#glass"/></svg><input placeholder="Search Scalperolo..." aria-label="Search"></label></div>
<div class="body"></div>
<div class="foot"><span>7 items</span><span>1 item selected</span><div class="views"><button class="on" aria-label="Details"><svg><use href="#details"/></svg></button><button aria-label="Thumbnails"><svg><use href="#pics"/></svg></button></div></div>
</article>

<article class="explorer w2">
<div class="title"><svg class="fold"><use href="#folder"/></svg><i></i><svg class="fold"><use href="#check"/></svg><svg class="fold"><use href="#folder"/></svg><svg class="dd"><use href="#more"/></svg><i></i><span>Terminal</span><div class="wb"><button aria-label="Minimize"><svg viewBox="0 0 11 11"><path d="M0 5.500h10" stroke="#111"/></svg></button><button aria-label="Maximize"><svg viewBox="0 0 11 11"><path d="M.5.5h10v10H.5z" fill="none" stroke="#111"/></svg></button><button aria-label="Close"><svg viewBox="0 0 11 11"><path d="M.5.5l10 10M10.500.5l-10 10" stroke="#111"/></svg></button></div></div>
<div class="ribbon"><button class="file">File</button><button>Home</button><button>Share</button><button>View</button><div class="tools"><svg class="cv"><use href="#chev"/></svg><span class="hp">?</span></div></div>
<div class="nav"><button aria-label="Back"><svg class="ar"><use href="#back"/></svg></button><button aria-label="Forward" class="dim"><svg class="ar"><use href="#fwd"/></svg></button><button aria-label="Recent"><svg class="cv"><use href="#chev"/></svg></button><button aria-label="Up"><svg class="ar"><use href="#up"/></svg></button>
<div class="address"><svg class="fold"><use href="#folder"/></svg><svg class="rc"><use href="#rchev"/></svg><a href="#">This PC</a><svg class="rc"><use href="#rchev"/></svg><a href="#">Local Disk (C:)</a><svg class="rc"><use href="#rchev"/></svg><a href="#">Users</a><svg class="rc"><use href="#rchev"/></svg><a href="#">odminrdpusr</a><svg class="rc"><use href="#rchev"/></svg><a href="#">AppData</a><svg class="rc"><use href="#rchev"/></svg><a href="#">Roaming</a><svg class="rc"><use href="#rchev"/></svg><a href="#">MetaQuotes</a><svg class="rc"><use href="#rchev"/></svg><a href="#">Terminal</a><svg class="cv end"><use href="#chev"/></svg><button class="rf" aria-label="Refresh"><svg><use href="#refresh"/></svg></button></div>
<label class="search"><svg><use href="#glass"/></svg><input placeholder="Search Terminal" aria-label="Search"></label></div>
<div class="body">
<ul class="tree"><li><a href="#"><svg><use href="#star"/></svg>Quick access</a></li><li class="gap"><a href="#"><svg><use href="#pc"/></svg>This PC</a></li><li class="in"><a href="#"><svg><use href="#cube"/></svg>3D Objects</a></li><li class="in"><a href="#"><svg><use href="#desktop"/></svg>Desktop</a></li><li class="in"><a href="#"><svg><use href="#docs"/></svg>Documents</a></li><li class="in"><a href="#"><svg><use href="#down"/></svg>Downloads</a></li><li class="in"><a href="#"><svg><use href="#music"/></svg>Music</a></li><li class="in"><a href="#"><svg><use href="#pics"/></svg>Pictures</a></li><li class="in"><a href="#"><svg><use href="#video"/></svg>Videos</a></li><li class="in sel"><a href="#"><svg><use href="#disk"/></svg>Local Disk (C:)</a></li><li class="gap"><a href="#"><svg><use href="#net"/></svg>Network</a></li></ul>
<table class="files"><colgroup><col class="c1"><col class="c2"><col class="c3"><col class="c4"></colgroup><thead><tr><th>Name<svg class="sort"><use href="#caret"/></svg></th><th>Date modified</th><th>Type</th><th>Size</th></tr></thead><tbody>
<tr><td><svg><use href="#folder"/></svg>1FE4E64DF1C2A10ABDAD9F135660B70F</td><td>8/5/2025 9:51 AM</td><td>File folder</td><td></td></tr>
<tr><td><svg><use href="#folder"/></svg>3F0B899A97021381DE575A20E53CAA58</td><td>8/5/2025 12:21 PM</td><td>File folder</td><td></td></tr>
<tr><td><svg><use href="#folder"/></svg>9BB124B7D418C7FB69DF2865535BA9BF</td><td>8/13/2025 3:33 PM</td><td>File folder</td><td></td></tr>
<tr><td><svg><use href="#folder"/></svg>77AC7E345EEEEA2F8A18C8510BE20281</td><td>8/5/2025 12:21 PM</td><td>File folder</td><td></td></tr>
<tr><td><svg><use href="#folder"/></svg>83C83E2225FBB4B4B6AAE47FB2709F92</td><td>8/12/2025 6:18 PM</td><td>File folder</td><td></td></tr>
<tr><td><svg><use href="#folder"/></svg>848AE06A90CD1F3686D69474D4FF58DD</td><td>8/12/2025 6:14 PM</td><td>File folder</td><td></td></tr>
<tr><td><svg><use href="#folder"/></svg>2617F9B6080B3A51F46C5D5849D1C0B0</td><td>8/12/2025 6:13 PM</td><td>File folder</td><td></td></tr>
<tr><td><svg><use href="#folder"/></svg>90303EDB94BF90F38B571DCE09741886</td><td>8/24/2025 4:00 AM</td><td>File folder</td><td></td></tr>
<tr class="focus"><td><svg><use href="#folder"/></svg>Common</td><td>7/29/2025 3:04 AM</td><td>File folder</td><td></td></tr>
<tr><td><svg><use href="#folder"/></svg>Community</td><td>8/14/2025 9:58 AM</td><td>File folder</td><td></td></tr>
<tr><td><svg><use href="#folder"/></svg>D0E8209F77C8CF37AD8BF550E51FF075</td><td>8/23/2025 6:23 AM</td><td>File folder</td><td></td></tr>
<tr><td><svg><use href="#folder"/></svg>E67EB8BA6BADCDA78B527BBA0B498F08</td><td>8/12/2025 12:14 PM</td><td>File folder</td><td></td></tr>
</tbody></table></div>
<div class="foot"><span>12 items</span></div>
</article>

<menu class="ctx m2">
<li><button>View<svg><use href="#sub"/></svg></button></li><li><button>Sort by<svg><use href="#sub"/></svg></button></li><li><button>Group by<svg><use href="#sub"/></svg></button></li><li><button>Refresh</button></li><li class="hr"></li>
<li><button>Customize this folder...</button></li><li class="hr"></li><li class="hot"><button>Paste</button></li><li><button>Paste shortcut</button></li><li><button>Undo Rename<kbd>Ctrl+Z</kbd></button></li><li class="hr"></li><li><button>Give access to<svg><use href="#sub"/></svg></button></li>
</menu>
<menu class="ctx m3">
<li><button class="b">Open</button></li><li><button>Open in new window</button></li><li><button>Pin to Quick access</button></li><li><svg><use href="#sharex"/></svg><button>Upload with ShareX</button></li><li class="hr"></li>
<li><button>Give access to<svg><use href="#sub"/></svg></button></li><li><button>Restore previous versions</button></li><li><button>Include in library<svg><use href="#sub"/></svg></button></li><li><button>Pin to Start</button></li><li><svg><use href="#rar"/></svg><button>Add to archive...</button></li><li><svg><use href="#rar"/></svg><button>Add to "Common.rar"</button></li><li><svg><use href="#rar"/></svg><button>Compress and email...</button></li><li><svg><use href="#rar"/></svg><button>Compress to "Common.rar" and email</button></li><li class="hr"></li>
<li><button>Send to<svg><use href="#sub"/></svg></button></li><li class="hr"></li><li><button>Cut</button></li><li><button>Copy</button></li><li class="hr"></li><li><button>Create shortcut</button></li><li><button>Delete</button></li><li><button>Rename</button></li><li class="hr"></li><li><button>Properties</button></li>
</menu>

<svg class="pointer p1"><use href="#cursor"/></svg>
<svg class="pointer p2"><use href="#cursor"/></svg>
<svg class="pointer p3"><use href="#cursor"/></svg>
<div class="mark k1"></div><div class="mark k2"></div><div class="mark k3"></div>
<svg class="arrow" viewBox="0 0 1070 80"><path d="M9 62L1053 10v-7l17 7-17 8v-4L9 66z" fill="#f8c828"/></svg>
<div class="step s1">1</div><div class="step s2">2</div><div class="step s3">3</div>

<div class="callout a"><svg viewBox="0 0 330 154"><path d="M14 46H199L329 2 234 57 230 139Q229 151 218 151H18Q8 151 7 141L2 58Q2 46 14 46Z"/></svg><p>Click to Terminal</p></div>
<div class="callout b"><svg viewBox="0 0 490 342"><path d="M20 169H154L63 1 219 169H468Q486 169 487 189L480 319Q478 337 460 337H28Q9 337 8 319L2 189Q2 169 20 169Z"/></svg><p>This folder contains the license key for<br>running the tester, as well as the<br>folder structure.</p></div>
<div class="callout c"><svg viewBox="0 0 430 344"><path d="M1 1L112 55Q114 54 119 54H392Q424 58 428 88L417 311Q413 337 386 342H128Q100 338 96 311L86 98Z"/></svg><p>After you have copied the<br>Common folder from the<br>zip archive, the next steps<br>will require you to<br>download and place the Ai<br>model data in the same</p></div>
</body>
</html>
```
FILE: styles.css
```css
*{box-sizing:border-box}
html,body{margin:0}
body{position:relative;display:flex;flex-direction:column;min-height:100vh;overflow:hidden;background:#fff;color:#111;font:11px/16px "Open Sans","Noto Sans",sans-serif}
button,input{font:inherit;color:inherit;border:0;background:none;padding:0;margin:0}
a{color:inherit;text-decoration:none}
ul,menu{list-style:none;margin:0;padding:0}
h2,p{margin:0;font:inherit}
i{font-style:normal}
svg{display:block;flex:none}
table{border-collapse:collapse;table-layout:fixed}
.defs{position:absolute;width:0;height:0}

/* Menu bar and toolbar */
.menubar{display:flex;align-items:center;gap:20px;height:21px;padding:0 6px 0 8px;background:#f7f3f7;border-bottom:1px solid #a8a4a8;font-size:12px}
.menubar .logo{width:12px;height:14px;margin-right:-8px}
.mdi{width:50px;height:14px;margin-left:auto}
.toolbar{display:flex;align-items:center;height:30px;padding:3px 2px 1px 0;background:#f7f3f7;color:#0a64ad;font-size:12px}
.tool{display:flex;align-items:center;justify-content:center;width:32px;height:26px;flex:none}
.tool svg{width:18px;height:18px}
.tool.off{color:#aaa}
.tool.on{background:#d6e8f6;border:1px solid;border-color:#999 #fff #fff #999}
.tool.dd{width:42px;justify-content:flex-start;padding-left:7px;gap:6px}
.tool.dd::after{content:"";border:4px solid transparent;border-top:5px solid #000;border-bottom:0}
.tool.algo{width:100px;color:#111;gap:12px}
.tool.algo svg{width:12px;height:14px}
.tool.order{width:95px;gap:7px}
.tool.order svg{width:14px;height:16px}
.sep{width:6px;height:26px;flex:none;border-left:1px solid #888;border-right:0;margin-left:1px;margin-right:-1px}
.grip{width:7px;height:24px;flex:none;background:repeating-linear-gradient(#b8b4b8 0 2px,transparent 2px 4px) 2px 0/2px 100% no-repeat}
.account{width:136px;height:26px;margin-left:auto;margin-right:3px}

/* Docked panels */
.workspace{display:grid;grid-template-columns:353px 1fr;column-gap:4px;background:#f7f3f7;border-bottom:1px solid #a0a0a0}
.panels{display:flex;flex-direction:column}
.panels h2{display:flex;justify-content:space-between;height:18px;padding:0 5px 0 4px;background:#bacbdc;line-height:18px}
.panels .x{color:#000;font-size:12px}
.watch{height:357px;background:#fff;border-top:1px solid #a8a4a8}
.watch table{width:353px}
.watch th{font-weight:400;height:26px;text-align:right;padding:0 5px;border-right:1px solid #aaa}
.watch th:first-child{text-align:left;width:141px}
.watch th:nth-child(2){width:70px}
.watch th:nth-child(3){width:70px}
.watch th:last-child{border:0;text-align:left;padding-left:7px}
.watch td{color:#777;height:18px;padding:0 4px}
.watch td:last-child{text-align:right}
.watch td b{font:18px/16px "Open Sans",sans-serif;color:#12a020;margin-right:6px;vertical-align:-2px}
.tabs{display:flex;height:28px;padding-left:5px}
.tabs::before{content:"";width:5px;margin-left:-5px;border-top:1px solid #000}
.tabs button{height:19px;padding:0 9px;color:#777;border-top:1px solid #000}
.tabs .cur{background:#fff;color:#111;border:1px solid #000;border-top-color:#fff}
.tabs::after{content:"";flex:1;border-top:1px solid #000}
.navigator{flex:1;min-height:354px;background:#fff;border-top:1px solid #a0a0a0}
.navigator li{display:flex;align-items:center;height:20px;padding-left:8px;gap:6px;background:repeating-linear-gradient(90deg,#888 0 1px,transparent 1px 3px) 20px 50%/4px 1px no-repeat}
.navigator li::before{content:"";width:5px;height:5px;border:solid #aaa;border-width:2px 2px 0 0;transform:rotate(45deg);margin-right:7px}
.navigator li.root::before{display:none}
.navigator li.root{padding-left:5px;height:21px;gap:7px;background:none}
.navigator li.leaf{background-position:12px 50%;background-size:12px 1px}
.navigator li.leaf::before{visibility:hidden}
.navigator svg{width:14px;height:14px}
.cl{--cf:#c8e6fa;color:#0a64ad}
.chart{min-width:0;display:flex;flex-direction:column}
.chart>svg{width:100%;height:743px}
.chart text{font-family:"DejaVu Sans Condensed","DejaVu Sans",sans-serif}
.axis text{fill:#fff;font-size:9px}
.scroll{height:24px;display:flex;justify-content:flex-end;gap:13px;padding:0 10px;color:#999;line-height:18px}

/* Toolbox and status bar */
.toolbox{flex:1;display:flex;min-height:377px;border-bottom:1px solid #a0a0a0}
.strip{width:17px;display:flex;flex-direction:column;justify-content:space-between;align-items:center;padding:3px 0 5px;background:#9db8d5}
.vert{writing-mode:vertical-rl;transform:rotate(180deg)}
.journal{flex:1;display:flex;flex-direction:column;justify-content:space-between}
.time{padding:4px 7px}
.btabs{display:flex;height:25px;margin-left:1px;padding-left:7px;background:#f7f3f7;border-top:1px solid #000;color:#777}
.btabs>button{height:16px;margin-top:1px;padding:0 10px;border-right:1px solid #777}
.btabs>button:nth-last-of-type(2){border:0}
.btabs>.cur{height:20px;margin-top:-1px;padding:0 8px;background:#fff;color:#111;border:1px solid #000;border-top-color:#fff}
.services{margin-left:auto;display:flex;gap:12px;padding-right:8px;color:#111}
.services a{display:flex;align-items:center;gap:5px}
.services svg{width:16px;height:16px}
.services .off{color:#aaa}
.status{display:flex;align-items:center;height:22px;background:#f7f3f7;border-bottom:1px solid #000}
.status span{width:71px;padding-left:5px;border-left:1px solid #888;line-height:18px;white-space:nowrap}
.status .hint{flex:1;border:0;padding-left:2px}
.status .profile{width:128px}
.status .when{width:98px}
.status .low{width:68px}
.status .vol{width:66px}
.status .net{width:120px;display:flex;align-items:center;gap:8px;padding-left:8px}
.status i{width:9px;height:9px;border-radius:5px;background:linear-gradient(#fff,#fff) center/5px 2px no-repeat #e03a30}

/* File explorer windows */
.explorer{--icon:16px;--ih:24px;--row:21px;position:absolute;display:flex;flex-direction:column;background:#fff;overflow:hidden}
.w1{left:38px;top:148px;width:960px;height:479px}
.w2{left:903px;top:93px;width:1066px;height:608px;padding-top:1px;border-left:1px solid #000}
.behind{left:904px;top:109px;width:1125px;height:633px;border:1px solid #999;border-top-color:#333}
.w3{left:108px;top:643px;width:883px;height:505px}
.title{display:flex;align-items:center;gap:8px;height:28px;padding:0 15px 2px 11px;flex:none}
.title i{width:1px;height:12px;background:#999}
.fold{width:14px;height:16px}
.title .dd{width:8px;height:8px}
.wb{display:flex;margin-left:auto}
.wb button{width:46px;height:12px;display:flex;justify-content:center}
.wb button:last-child{margin-right:-14px}
.wb svg{width:11px;height:11px}
.ribbon{display:flex;height:24px;padding-left:1px;border-bottom:1px solid #dcdcdc;flex:none;color:#333}
.ribbon button{width:58px}
.ribbon .file{width:56px;background:#0063b1;color:#fff}
.tools{display:flex;align-items:center;gap:10px;margin-left:auto;padding-right:4px;color:#888}
.hp{width:16px;height:16px;border-radius:8px;background:#0a6ed0;border:1px solid #0a4f9e;color:#fff;font-weight:700;line-height:14px;text-align:center}
.cv{width:10px;height:6px}
.nav{display:flex;height:40px;padding:5px 13px 5px 5px;flex:none;color:#666}
.behind .nav{justify-content:flex-end}
.nav>button{width:30px;display:flex;align-items:center;justify-content:center}
.nav>button:nth-child(3){width:18px}
.nav>button:nth-child(4){width:24px}
.nav .dim{color:#ccc}
.ar{width:14px;height:14px}
.address{flex:1;display:flex;align-items:center;border:1px solid #d9d9d9;padding-left:4px;white-space:nowrap;margin-right:12px}
.address a{color:#111}
.rc{width:6px;height:10px;margin:0 9px}
.lead{width:22px;text-align:center;font-size:14px}
.address .end{margin-left:auto}
.rf{width:34px;height:28px;margin-left:11px;border-left:1px solid #d9d9d9;display:flex;align-items:center;justify-content:center}
.rf svg{width:12px;height:14px}
.search{width:147px;display:flex;align-items:center;gap:12px;border:1px solid #d9d9d9;padding-left:14px}
.search svg{width:14px;height:14px}
.search input{flex:1;min-width:0;width:100%}
.search input::placeholder{color:#666;opacity:1}
.body{flex:1;display:flex;align-items:stretch;padding-top:2px;min-height:0}
.tree{width:160px;padding-top:16px;border-right:1px solid #f0f0f0;flex:none}
.tree a{display:flex;align-items:center;gap:5px;height:var(--ih);padding-left:25px}
.tree svg{width:var(--icon);height:var(--icon)}
.tree .in a{padding-left:33px}
.tree .gap{margin-top:8px}
.tree .sel{margin:0 3px 0 1px;background:#dcd9dc}
.tree .sel a{padding-left:32px}
.files{margin-left:15px;align-self:flex-start;width:600px}
.c1{width:257px}.c2{width:144px}.c3{width:120px}.c4{width:79px}
.files th{position:relative;height:25px;padding:0 6px;font-weight:400;text-align:left;color:#4c607a;border-right:1px solid #e2e2e2}
.files th:first-child{padding-left:4px}
.sort{position:absolute;left:122px;top:0;width:10px;height:6px}
.files tbody::before{content:"";display:block;height:6px}
.files td{height:var(--row);padding:0 6px;color:#6d6d6d;white-space:nowrap;line-height:var(--row)}
.files td:first-child{color:#111}
.files td:last-child{text-align:right}
.files td svg{float:left;width:13px;height:16px;margin:2px 5px 0 0}
.focus{outline:1px solid #99d1ff}
.picked{background:#cce8ff;outline:1px solid #99d1ff}
.foot{display:flex;align-items:center;height:24px;padding-left:15px;flex:none;color:#1e395b}
.foot>span{border-right:1px solid #eee;padding-right:10px;margin-right:10px;line-height:12px}
.views{display:flex;align-items:center;gap:4px;margin-left:auto;padding-right:7px}
.views button{display:flex}
.views .on{padding:4px 2px;background:#cbe8f6;border:1px solid #26a0da}
.views svg{width:16px;height:14px}

.small{--icon:12px;--ih:19px;--row:17px;font-size:9px;line-height:14px}
.small .title{height:26px;padding:0 1px 0 2px;gap:6px}
.small .title i{margin-right:1px}
.small .fold{width:11px;height:13px}
.small .ribbon{height:18px;padding:0}
.small .ribbon button{width:46px}
.small .ribbon .file{width:39px}
.small .wb button{width:37px}
.small .nav{height:33px;padding:5px 8px 5px 0}
.small .nav>button{width:22px}
.small .nav>button:nth-child(3){width:15px}
.small .nav>button:nth-child(4){width:20px}
.small .ar{width:11px;height:11px}
.small .cv{width:8px;height:5px}
.small .address{padding-left:2px;margin-right:10px}
.small .rc{width:5px;height:8px;margin:0 7px}
.small .rf{width:24px;height:22px;margin-left:7px}
.small .rf svg{width:10px;height:11px}
.small .search{width:117px}
.small .search svg{width:11px;height:11px}
.small .body{padding-top:1px}
.small .tree{width:121px;padding-top:12px}
.small .tree a{padding-left:14px;gap:4px}
.small .tree .in a{padding-left:20px}
.small .tree .sel{margin-left:0}
.small .tree .gap{margin-top:6px}
.small .files{margin-left:11px;width:475px}
.small .c1{width:205px}.small .c2{width:112px}.small .c3{width:96px}.small .c4{width:62px}
.small .files th{height:20px}
.small .files th:first-child{padding-left:3px}
.small .sort{left:97px}
.small .files tbody::before{height:3px}
.small .files td svg{width:11px;height:13px;margin-right:3px}
.small .files td:first-child{padding-left:5px}
.small .foot{padding-left:6px}
.small .foot>span{padding-right:8px;margin-right:8px}
.small .views{padding-right:3px}
.small .views .on{padding:2px}
.small .views svg{width:12px;height:12px}

/* Context menus */
.ctx{position:absolute;background:#eee;border:1px solid #a0a0a0;padding:4px 3px}
.ctx li{position:relative;height:22px}
.ctx button{display:flex;align-items:center;justify-content:space-between;width:100%;height:100%;padding:0 9px 0 31px;text-align:left}
.ctx button svg{width:7px;height:13px}
.ctx kbd{font:inherit;margin-right:7px}
.ctx .hr{height:7px;padding:3px 7px}
.ctx .hr::before{content:"";display:block;height:1px;background:#999}
.hot{background:#fff}
.m2{left:1222px;top:518px;width:234px;height:224px;overflow:hidden;border-bottom:0}
.m3{left:298px;top:748px;width:251px;font-size:9px;line-height:14px}
.m3 li{height:17px}
.m3 button{padding:0 5px 0 24px}
.m3 li>svg{position:absolute;left:5px;top:2px;width:13px;height:13px}
.m3 .hr{padding:3px 5px}
.m3 .b{font-weight:700}

/* Annotations */
.pointer{position:absolute;width:12px;height:18px}
.p1{left:465px;top:478px}
.p2{left:1284px;top:654px;width:7px;height:11px}
.p3{left:351px;top:763px;width:7px;height:10px}
.mark{position:absolute;background:#f5da1e;mix-blend-mode:multiply}
.k1{left:408px;top:186px;width:68px;height:50px}
.k2{left:305px;top:1011px;width:139px;height:19px}
.k3{left:1214px;top:635px;width:194px;height:41px}
.arrow{position:absolute;left:490px;top:155px;width:1070px;height:80px;filter:drop-shadow(1px 6px 4px rgba(0,0,0,.5))}
.step{position:absolute;width:41px;height:41px;border-radius:2px;background:#f6bb20;color:#fff;text-align:center;font:700 26px/41px "Liberation Sans",sans-serif;box-shadow:1px 2px 4px rgba(0,0,0,.5)}
.s1{left:351px;top:174px}
.s2{left:445px;top:1003px}
.s3{left:1428px;top:635px}
.callout{position:absolute;font:500 25px/35px Lato,sans-serif;color:#000}
.callout svg{position:absolute;inset:0;width:100%;height:100%}
.callout path{fill:#f8c82a;stroke:#fff;stroke-width:1}
.callout p{position:relative;white-space:nowrap}
.a{left:128px;top:240px;width:330px;height:154px;padding:84px 0 0 27px}
.b{left:575px;top:748px;width:490px;height:342px;padding:203px 0 0 33px}
.c{left:1543px;top:399px;width:430px;height:344px;padding:74px 0 0 109px}
```
